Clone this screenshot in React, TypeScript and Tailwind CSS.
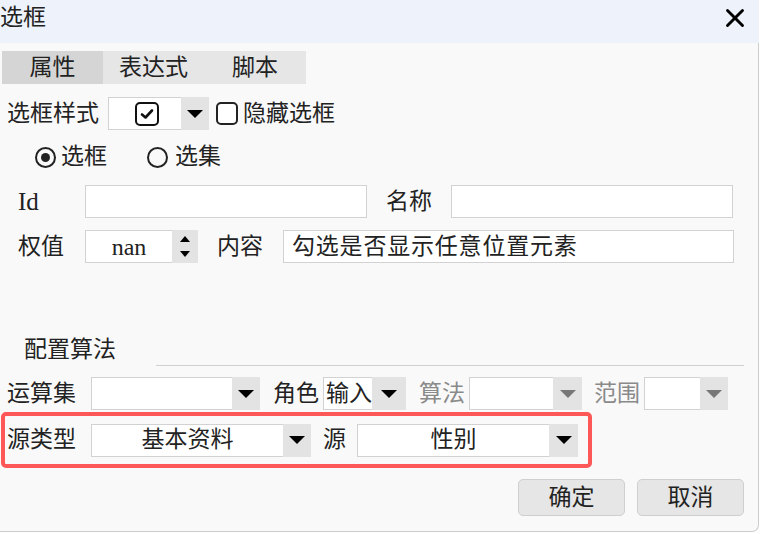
import { X } from "lucide-react";

function Arrow({ muted }: { muted?: boolean }) {
  return (
    <div
      className={
        muted
          ? "w-0 h-0 border-l-[8px] border-r-[8px] border-t-[8px] border-l-transparent border-r-transparent border-t-[#777]"
          : "w-0 h-0 border-l-[8px] border-r-[8px] border-t-[8px] border-l-transparent border-r-transparent border-t-black"
      }
    />
  );
}

function Combo({
  width,
  arrow,
  children,
  align = "center",
  muted,
}: {
  width: number;
  arrow: number;
  children?: React.ReactNode;
  align?: "center" | "left";
  muted?: boolean;
}) {
  return (
    <div className="flex h-[33px] shrink-0" style={{ width }}>
      <div
        className={
          align === "center"
            ? "flex-1 flex items-center justify-center bg-white border border-r-0 border-[#d2d2d2] whitespace-nowrap"
            : "flex-1 flex items-center pl-[2px] bg-white border border-r-0 border-[#d2d2d2] whitespace-nowrap overflow-hidden"
        }
      >
        {children}
      </div>
      <div className="flex items-center justify-center bg-[#e3e3e3] shrink-0" style={{ width: arrow }}>
        <Arrow muted={muted} />
      </div>
    </div>
  );
}

function Radio({ checked }: { checked?: boolean }) {
  return (
    <div className="w-[21px] h-[21px] rounded-full border-2 border-[#222] flex items-center justify-center shrink-0">
      {checked && <div className="w-[9px] h-[9px] rounded-full bg-[#222]" />}
    </div>
  );
}

export default function App() {
  return (
    <div className="w-[762px] h-[534px] bg-white font-['Liberation_Serif','Noto_Sans_CJK_SC',serif] text-[23px] text-[#222] leading-[26px]">
      <div className="w-[759px]">
        {/* Title bar */}
        <div className="h-[43px] bg-[#eef3fb] flex items-start justify-between pt-[5px]">
          <span className="leading-[26px]">选框</span>
          <X className="mr-[9px] mt-[-2px] text-black" size={30} strokeWidth={2.3} />
        </div>

        <div className="bg-[#f9f9f9] border-r border-b border-[#cccccc] rounded-br-[7px] pb-[15px]">
          {/* Tabs */}
          <div className="flex pt-[8px] pl-[2px]">
            <div className="w-[101px] h-[33px] bg-[#d5d5d5] flex items-center justify-center">属性</div>
            <div className="w-[101px] h-[33px] bg-[#e6e6e6] flex items-center justify-center">表达式</div>
            <div className="w-[102px] h-[33px] bg-[#e6e6e6] flex items-center justify-center">脚本</div>
          </div>

          {/* 选框样式 */}
          <div className="flex items-center h-[33px] mt-[13px] pl-[7px]">
            <span className="w-[101px]">选框样式</span>
            <Combo width={101} arrow={28}>
              <div className="w-[24px] h-[24px] rounded-[5px] border-2 border-[#111] flex items-center justify-center ml-[3px]">
                <svg width="14" height="12" viewBox="0 0 14 12" fill="none">
                  <path d="M2 6.5 L5.5 9.5 L12 2.5" stroke="#111" strokeWidth="2.6" strokeLinecap="round" strokeLinejoin="round" />
                </svg>
              </div>
            </Combo>
            <div className="w-[22px] h-[23px] ml-[7px] rounded-[5px] border-2 border-[#222] bg-white" />
            <span className="ml-[5px]">隐藏选框</span>
          </div>

          {/* radios */}
          <div className="flex items-center h-[24px] mt-[15px] pl-[35px]">
            <Radio checked />
            <span className="ml-[5px] w-[86px]">选框</span>
            <Radio />
            <span className="ml-[7px]">选集</span>
          </div>

          {/* Id / 名称 */}
          <div className="flex items-center h-[33px] mt-[16px] pl-[18px]">
            <span className="w-[67px] text-[25px]">Id</span>
            <div className="w-[282px] h-[33px] bg-white border border-[#d2d2d2]" />
            <span className="w-[84px] pl-[19px]">名称</span>
            <div className="w-[282px] h-[33px] bg-white border border-[#d2d2d2]" />
          </div>

          {/* 权值 / 内容 */}
          <div className="flex items-center h-[33px] mt-[12px] pl-[18px]">
            <span className="w-[67px]">权值</span>
            <div className="flex w-[113px] h-[33px]">
              <div className="flex-1 bg-white border border-r-0 border-[#d2d2d2] flex items-center justify-center text-[24px]">nan</div>
              <div className="w-[26px] bg-[#e3e3e3] flex flex-col items-center justify-center gap-[9px]">
                <div className="w-0 h-0 border-l-[5px] border-r-[5px] border-b-[6px] border-l-transparent border-r-transparent border-b-black" />
                <div className="w-0 h-0 border-l-[5px] border-r-[5px] border-t-[6px] border-l-transparent border-r-transparent border-t-black" />
              </div>
            </div>
            <span className="w-[85px] pl-[19px]">内容</span>
            <div className="w-[451px] h-[33px] bg-white border border-[#d2d2d2] flex items-center pl-[8px] tracking-[0.8px]">
              勾选是否显示任意位置元素
            </div>
          </div>

          {/* 配置算法 */}
          <div className="flex h-[28px] mt-[75px]">
            <span className="w-[156px] pl-[24px] leading-[24px]">配置算法</span>
            <div className="self-end w-[588px] h-px bg-[#d0d0d0]" />
          </div>

          {/* 运算集 row */}
          <div className="flex items-center h-[33px] mt-[11px] pl-[7px]">
            <span className="w-[84px]">运算集</span>
            <Combo width={169} arrow={28} />
            <span className="w-[63px] pl-[13px]">角色</span>
            <Combo width={83} arrow={34} align="left">输入</Combo>
            <span className="w-[63px] pl-[13px] text-[#8a8a8a]">算法</span>
            <Combo width={113} arrow={29} muted />
            <span className="w-[62px] pl-[12px] text-[#8a8a8a]">范围</span>
            <Combo width={84} arrow={28} muted />
          </div>

          {/* highlighted row */}
          <div className="mt-[2px] ml-[1px] w-[591px] h-[56px] border-4 border-[#fd5757] rounded-[5px] flex items-center pl-[2px]">
            <span className="w-[84px]">源类型</span>
            <Combo width={220} arrow={28}>基本资料</Combo>
            <span className="w-[46px] pl-[12px]">源</span>
            <Combo width={221} arrow={29}>性别</Combo>
          </div>

          {/* buttons */}
          <div className="flex justify-end gap-[12px] pr-[14px] mt-[11px]">
            <button className="w-[107px] h-[37px] bg-[#e6e6e6] border border-[#cfcfcf] rounded-[5px]">确定</button>
            <button className="w-[107px] h-[37px] bg-[#e6e6e6] border border-[#cfcfcf] rounded-[5px]">取消</button>
          </div>
        </div>
      </div>
    </div>
  );
}
